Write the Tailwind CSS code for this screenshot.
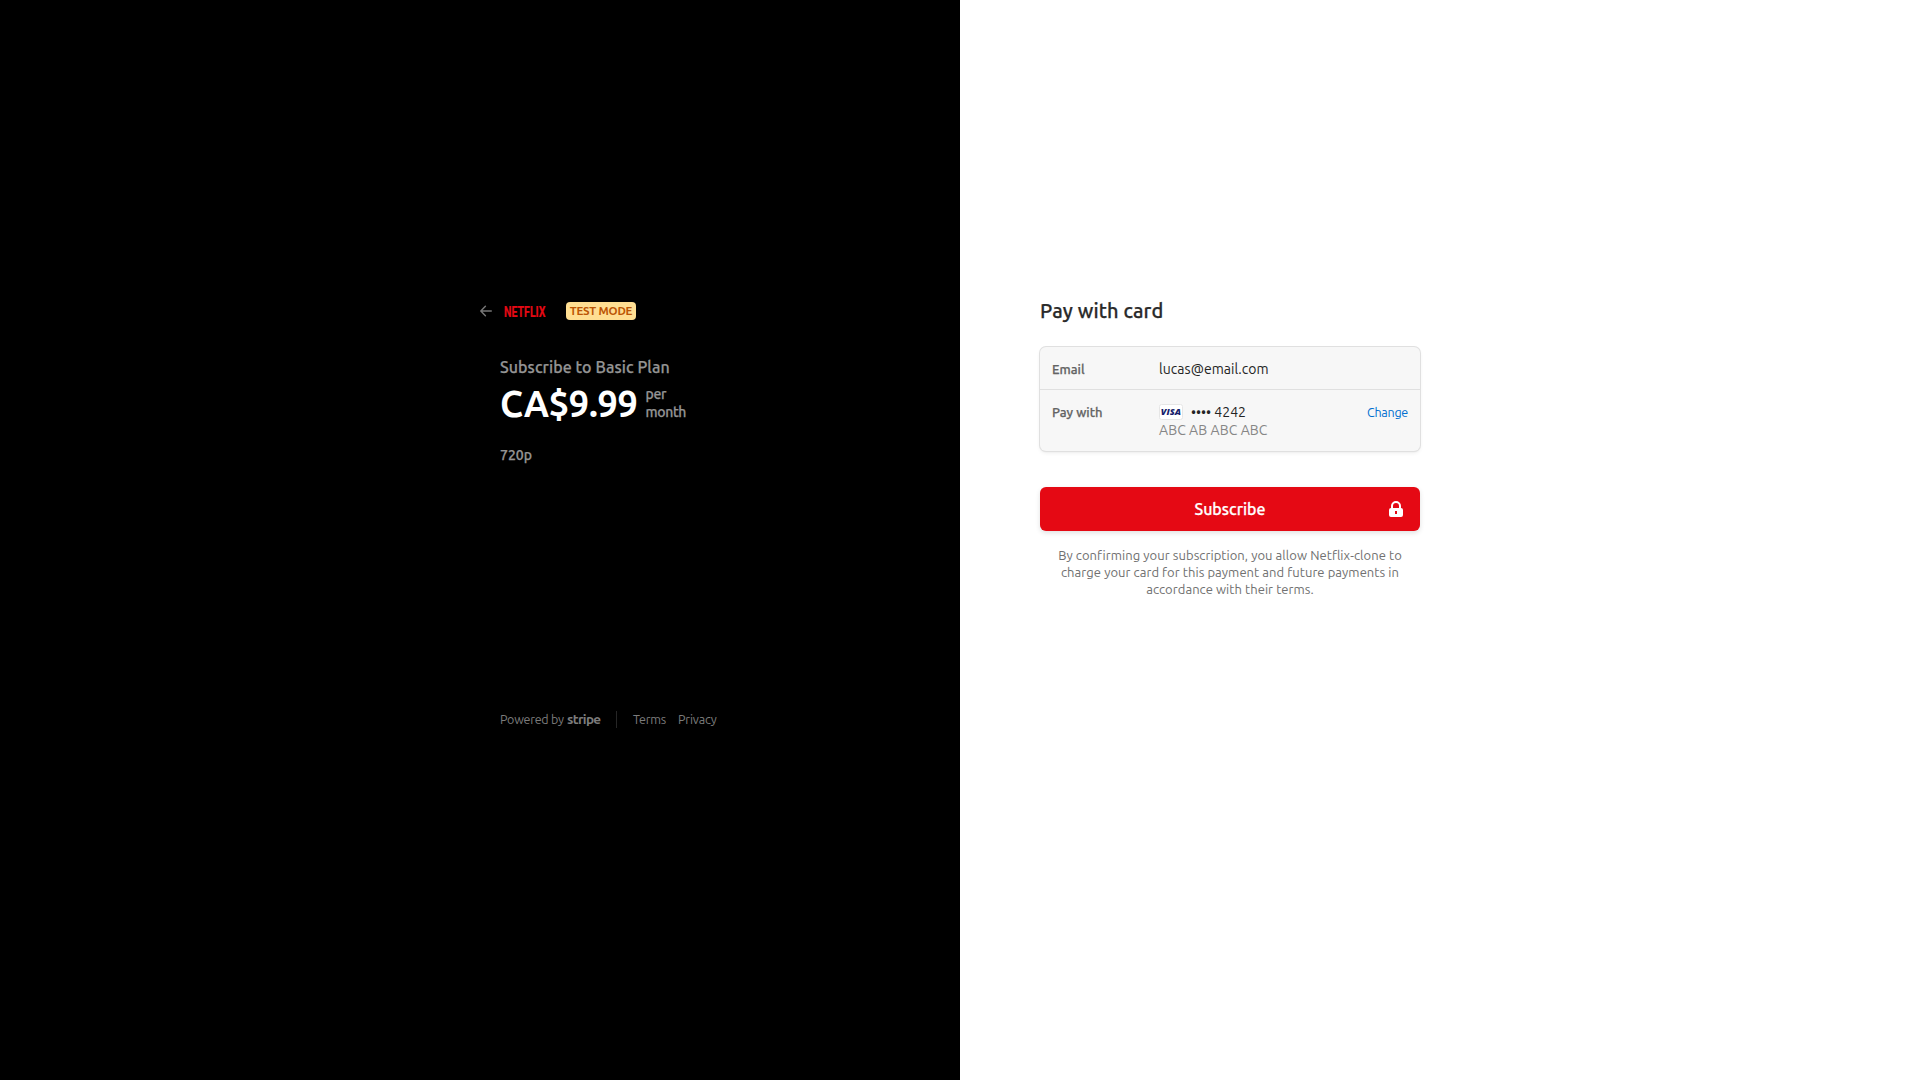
<!DOCTYPE html>
<html lang="en">
<head>
<meta charset="utf-8">
<title>Pay with card</title>
<script src="https://cdn.jsdelivr.net/npm/@tailwindcss/browser@4"></script>
</head>
<body class="flex h-screen w-screen overflow-hidden bg-white font-['Ubuntu','Noto_Sans','Open_Sans',sans-serif]">
<main class="flex h-full w-full">
  <section class="flex w-1/2 flex-col bg-black pt-[300px] pl-[500px] text-[#949494]">
    <header class="-ml-5 flex h-[22px] items-center">
      <svg class="h-3 w-3" viewBox="0 0 12 12" fill="none" stroke="#777" stroke-width="1.4" stroke-linecap="round" stroke-linejoin="round"><path d="M11.3 6H.9M5.4 1.2.8 6l4.6 4.8"/></svg>
      <svg class="ml-3 h-4 w-[42px] overflow-visible" viewBox="0 0 42 16" role="img" aria-label="Netflix"><text x="0" y="13.8" textLength="41.5" lengthAdjust="spacingAndGlyphs" font-family="Roboto, sans-serif" font-weight="700" font-size="15" fill="#e50914" stroke="#e50914" stroke-width=".2">NETFLIX</text></svg>
      <span class="ml-5 flex h-[18px] w-[70px] items-center justify-center rounded bg-[#ffde92] text-[11.5px] font-bold tracking-[-0.2px] text-[#bb5504]">TEST MODE</span>
    </header>
    <h1 class="mt-[33px] h-6 text-base leading-6 font-medium tracking-[0.08px] whitespace-nowrap [-webkit-text-stroke:0.25px]">Subscribe to Basic Plan</h1>
    <div class="flex h-12 items-center">
      <span class="mt-0.5 w-[138px] text-4xl font-bold tracking-[-0.25px] whitespace-nowrap text-white">CA$9.99</span>
      <span class="ml-[7.5px] flex flex-col text-sm leading-[18px] font-medium tracking-[-0.35px] [-webkit-text-stroke:0.25px]"><span>per</span><span>month</span></span>
    </div>
    <p class="mt-[18px] text-sm leading-5 font-medium [-webkit-text-stroke:0.25px]">720p</p>
    <footer class="mt-[244px] flex h-5 items-center text-[12.5px] text-[#7c7c7c]">
      <span class="mt-px w-16 tracking-[-0.25px] whitespace-nowrap">Powered by</span>
      <span class="mt-px ml-[3px] w-[33px] text-[13.5px] font-bold tracking-[-0.65px]">stripe</span>
      <span class="ml-4 h-[17px] w-px bg-[#262626]"></span>
      <span class="mt-px ml-4 w-[34px] tracking-[-0.25px]">Terms</span>
      <span class="mt-px ml-[11px] tracking-[-0.15px]">Privacy</span>
    </footer>
  </section>
  <section class="flex w-1/2 flex-col pt-[298px] pl-20">
    <h2 class="h-[26px] text-xl leading-[26px] font-medium tracking-[0.13px] text-[#2a2a2a] [-webkit-text-stroke:0.25px]">Pay with card</h2>
    <div class="mt-[23px] h-[104px] w-[380px] rounded-md bg-[#f7f7f7] shadow-[0_0_0_1px_#e0e0e0,0_2px_4px_rgba(0,0,0,0.07),0_1px_2px_rgba(0,0,0,0.05)]">
      <div class="flex h-[43px] items-center border-b border-[#e0e0e0] px-3 pt-0.5">
        <span class="mt-px w-[107px] text-[13px] font-medium text-[#646464] [-webkit-text-stroke:0.25px]">Email</span>
        <span class="text-sm tracking-[0.05px] text-[#242424]">lucas@email.com</span>
      </div>
      <div class="flex items-start px-3 pt-[13px]">
        <span class="w-[107px] text-[13px] leading-[18px] font-medium text-[#646464] [-webkit-text-stroke:0.25px]">Pay with</span>
        <div class="flex-1">
          <div class="flex h-[18px] items-center text-sm text-[#242424]">
            <svg class="-mt-px h-4 w-6" viewBox="0 0 24 16" role="img" aria-label="Visa"><rect x=".5" y=".5" width="23" height="15" rx="2" fill="#fff" stroke="#e6e6e6"/><text x="1.8" y="11.3" textLength="20.2" lengthAdjust="spacingAndGlyphs" font-family="Open Sans, sans-serif" font-weight="800" font-style="italic" font-size="9" fill="#171e6c">VISA</text></svg>
            <span class="ml-2">•••• 4242</span>
          </div>
          <div class="text-sm leading-[18px] tracking-[0.08px] text-[#868686]">ABC AB ABC ABC</div>
        </div>
        <a class="text-[12.5px] leading-[18px] tracking-[-0.25px] text-[#006fd0]">Change</a>
      </div>
    </div>
    <button class="relative mt-9 flex h-11 w-[380px] items-center justify-center rounded-md bg-[#e50914] text-base font-medium text-white shadow-[0_2px_5px_rgba(0,0,0,0.12)] [-webkit-text-stroke:0.25px]">Subscribe
      <svg class="absolute top-[14px] right-[17px] h-4 w-[14px]" viewBox="0 0 14 16"><path fill="#fff" fill-rule="evenodd" d="M2 7V5a5 5 0 0 1 10 0v2a2 2 0 0 1 2 2v5a2 2 0 0 1-2 2H2a2 2 0 0 1-2-2V9a2 2 0 0 1 2-2Zm2 0h6V5a3 3 0 0 0-6 0Zm2 3v3h2v-3Z"/></svg>
    </button>
    <p class="mt-4 w-[380px] text-center text-[13px] leading-[17px] tracking-[0.06px] text-[#707070]">By confirming your subscription, you allow Netflix-clone to<br>charge your card for this payment and future payments in<br>accordance with their terms.</p>
  </section>
</main>
</body>
</html>
